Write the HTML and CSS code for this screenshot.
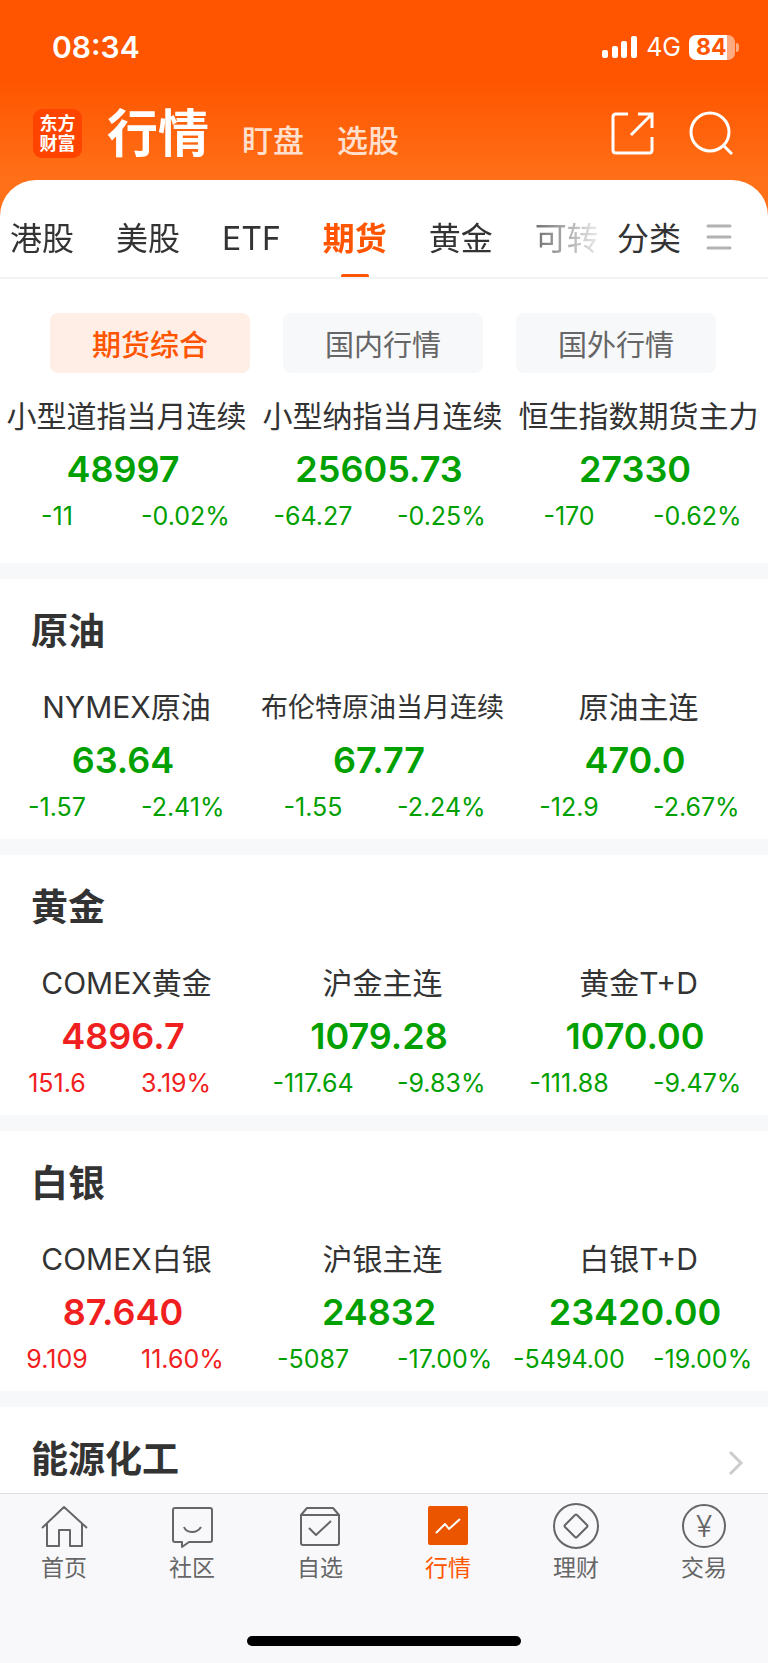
FILE: index.html
```
<!DOCTYPE html>
<html lang="zh-CN">

<head>
  <meta charset="UTF-8">
  <meta name="viewport" content="width=device-width, initial-scale=1.0">
  <link rel="stylesheet" href="styles.css">
  <title>行情</title>
</head>

<body>

  <header class="header">
    <div class="status-bar">
      <span class="time">08:34</span>
      <div class="status-icons">
        <svg class="signal" width="36" height="24" viewBox="0 0 36 24" fill="#fff">
          <rect x="0" y="15" width="6" height="8" rx="2" />
          <rect x="10" y="11" width="6" height="12" rx="2" />
          <rect x="19" y="6" width="6" height="17" rx="2" />
          <rect x="29" y="1" width="6" height="22" rx="2" />
        </svg>
        <span class="network">4G</span>
        <div class="battery"><span class="battery-level">84</span></div>
      </div>
    </div>
    <div class="title-bar">
      <div class="logo">东方<br>财富</div>
      <nav class="title-nav">
        <h1>行情</h1>
        <a href="#">盯盘</a>
        <a href="#">选股</a>
      </nav>
      <button class="icon-btn" aria-label="分享">
        <svg width="44" height="44" viewBox="0 0 44 44" fill="none" stroke="#fff" stroke-width="3">
          <path d="M18 3H6Q3 3 3 6V39Q3 42 6 42H39Q42 42 42 39V26" />
          <path d="M28 3H42V17M42 3L21 24" />
        </svg>
      </button>
      <button class="icon-btn" aria-label="搜索">
        <svg width="44" height="44" viewBox="0 0 44 44" fill="none" stroke="#fff" stroke-width="3">
          <circle cx="21" cy="21" r="19" />
          <path d="M34 34L43 43" />
        </svg>
      </button>
    </div>
  </header>

  <main class="content">
    <div class="tabs">
      <nav class="tab-list">
        <a href="#">港股</a>
        <a href="#">美股</a>
        <a href="#">ETF</a>
        <a href="#" class="active">期货</a>
        <a href="#">黄金</a>
        <a href="#">可转</a>
      </nav>
      <button class="category-btn">分类
        <svg width="26" height="26" viewBox="0 0 26 26" stroke="#b2b2b2" stroke-width="3" stroke-linecap="round">
          <path d="M2 2H24M2 13H24M2 24H24" />
        </svg>
      </button>
    </div>

    <div class="chips">
      <button class="chip active">期货综合</button>
      <button class="chip">国内行情</button>
      <button class="chip">国外行情</button>
    </div>

    <section class="section first">
      <div class="quotes">
        <a href="#" class="quote down">
          <span class="name">小型道指当月连续</span>
          <span class="price">48997</span>
          <span class="change">-11</span><span class="percent">-0.02%</span>
        </a>
        <a href="#" class="quote down">
          <span class="name">小型纳指当月连续</span>
          <span class="price">25605.73</span>
          <span class="change">-64.27</span><span class="percent">-0.25%</span>
        </a>
        <a href="#" class="quote down">
          <span class="name">恒生指数期货主力</span>
          <span class="price">27330</span>
          <span class="change">-170</span><span class="percent">-0.62%</span>
        </a>
      </div>
    </section>

    <section class="section">
      <h2>原油</h2>
      <div class="quotes">
        <a href="#" class="quote down">
          <span class="name">NYMEX原油</span>
          <span class="price">63.64</span>
          <span class="change">-1.57</span><span class="percent">-2.41%</span>
        </a>
        <a href="#" class="quote down">
          <span class="name small">布伦特原油当月连续</span>
          <span class="price">67.77</span>
          <span class="change">-1.55</span><span class="percent">-2.24%</span>
        </a>
        <a href="#" class="quote down">
          <span class="name">原油主连</span>
          <span class="price">470.0</span>
          <span class="change">-12.9</span><span class="percent">-2.67%</span>
        </a>
      </div>
    </section>

    <section class="section">
      <h2>黄金</h2>
      <div class="quotes">
        <a href="#" class="quote up">
          <span class="name">COMEX黄金</span>
          <span class="price">4896.7</span>
          <span class="change">151.6</span><span class="percent">3.19%</span>
        </a>
        <a href="#" class="quote down">
          <span class="name">沪金主连</span>
          <span class="price">1079.28</span>
          <span class="change">-117.64</span><span class="percent">-9.83%</span>
        </a>
        <a href="#" class="quote down">
          <span class="name">黄金T+D</span>
          <span class="price">1070.00</span>
          <span class="change">-111.88</span><span class="percent">-9.47%</span>
        </a>
      </div>
    </section>

    <section class="section">
      <h2>白银</h2>
      <div class="quotes">
        <a href="#" class="quote up">
          <span class="name">COMEX白银</span>
          <span class="price">87.640</span>
          <span class="change">9.109</span><span class="percent">11.60%</span>
        </a>
        <a href="#" class="quote down">
          <span class="name">沪银主连</span>
          <span class="price">24832</span>
          <span class="change">-5087</span><span class="percent">-17.00%</span>
        </a>
        <a href="#" class="quote down">
          <span class="name">白银T+D</span>
          <span class="price">23420.00</span>
          <span class="change">-5494.00</span><span class="percent">-19.00%</span>
        </a>
      </div>
    </section>

    <section class="section">
      <h2>能源化工
        <svg width="16" height="26" viewBox="0 0 16 26" fill="none" stroke="#ccc" stroke-width="3">
          <path d="M2 2L13 13L2 24" />
        </svg>
      </h2>
    </section>
  </main>

  <footer class="bottom-bar">
    <nav class="bottom-nav">
      <a href="#">
        <svg viewBox="0 0 48 48">
          <path d="M2 27L24 6L47 27M7 23V45H19V29H30V45H42V23" />
        </svg>
        首页
      </a>
      <a href="#">
        <svg viewBox="0 0 48 48">
          <path d="M7 7H42Q44 7 44 9V39Q44 41 42 41H21L14 46V41H7Q5 41 5 39V9Q5 7 7 7Z" />
          <path d="M16 26Q18 31 24 31T33 26" />
        </svg>
        社区
      </a>
      <a href="#">
        <svg viewBox="0 0 48 48">
          <path d="M5 14L11 7H37L43 14V42Q43 44 41 44H7Q5 44 5 42ZM5 14H43" />
          <path d="M13 27L20 34L35 20" />
        </svg>
        自选
      </a>
      <a href="#" class="active">
        <svg viewBox="0 0 48 48">
          <rect class="fill" x="4" y="5" width="40" height="39" rx="2" />
          <path class="line" d="M12 32L21 23L25 28L36 18" />
        </svg>
        行情
      </a>
      <a href="#">
        <svg viewBox="0 0 48 48">
          <circle cx="24" cy="25" r="22" />
          <path d="M23 14Q24 13 25 14L35 24Q36 25 35 26L25 36Q24 37 23 36L13 26Q12 25 13 24Z" />
        </svg>
        理财
      </a>
      <a href="#">
        <svg viewBox="0 0 48 48">
          <circle cx="24" cy="25" r="21" />
          <text x="24" y="36" text-anchor="middle">¥</text>
        </svg>
        交易
      </a>
    </nav>
    <div class="home-indicator"></div>
  </footer>

</body>

</html>
```
FILE: styles.css
```
* {
  box-sizing: border-box;
}

body {
  display: flex;
  flex-direction: column;
  height: 100vh;
  margin: 0;
  overflow: hidden;
  background: linear-gradient(#ff5500 80px, #ff7018 180px);
  font-family: Inter, "Noto Sans CJK SC", sans-serif;
  color: #333;
}

a {
  color: inherit;
  text-decoration: none;
}

button {
  padding: 0;
  border: none;
  background: none;
  font-family: inherit;
  color: inherit;
}

svg {
  display: block;
  flex: none;
}

/* header */
.status-bar {
  display: flex;
  justify-content: space-between;
  align-items: center;
  height: 94px;
  padding: 0 30px 0 52px;
  color: #fff;
}

.time {
  font-size: 30px;
  font-weight: 600;
}

.status-icons {
  display: flex;
  align-items: center;
  gap: 8px;
}

.network {
  font-size: 25px;
}

.battery {
  position: relative;
  width: 46px;
  height: 25px;
  margin-right: 3px;
  border-radius: 7px;
  background: linear-gradient(90deg, #fff 38px, #ffaa80 38px);
}

.battery::after {
  content: "";
  position: absolute;
  top: 8px;
  right: -4px;
  width: 3px;
  height: 9px;
  border-radius: 0 3px 3px 0;
  background-color: #ffaa80;
}

.battery-level {
  display: block;
  padding-left: 7px;
  font-size: 23px;
  font-weight: 700;
  line-height: 25px;
  color: #ff5500;
}

.title-bar {
  display: flex;
  align-items: center;
  height: 86px;
  padding: 0 35px 8px 33px;
  color: #fff;
}

.logo {
  width: 49px;
  height: 49px;
  padding-top: 5px;
  border-radius: 9px;
  background-color: #ff4400;
  font-size: 18px;
  font-weight: 700;
  line-height: 20px;
  text-align: center;
}

.title-nav {
  display: flex;
  flex: 1;
  align-items: baseline;
  gap: 33px;
  margin-left: 25px;
  padding-top: 8px;
  font-size: 31px;
  font-weight: 500;
  line-height: 60px;
}

.title-nav h1 {
  margin: 0;
  font-size: 51px;
  font-weight: 700;
}

.title-nav a {
  color: #ffe0cf;
}

.icon-btn {
  margin-left: 35px;
}

/* white card */
.content {
  flex: 1;
  min-height: 0;
  overflow: hidden;
  border-radius: 36px 36px 0 0;
  background-color: #fff;
}

.tabs {
  display: flex;
  height: 99px;
  padding: 0 36px 0 10px;
  border-bottom: 2px solid #f2f3f5;
  font-size: 32px;
}

.tab-list {
  display: flex;
  flex: 1;
  gap: 42px;
  overflow: hidden;
  white-space: nowrap;
  line-height: 118px;
  -webkit-mask-image: linear-gradient(90deg, #000 84%, transparent 102%);
  mask-image: linear-gradient(90deg, #000 84%, transparent 102%);
}

.tab-list a {
  position: relative;
}

.tab-list .active {
  color: #ff5500;
  font-weight: 700;
}

.tab-list .active::after {
  content: "";
  position: absolute;
  left: 50%;
  top: 94px;
  width: 28px;
  height: 4px;
  margin-left: -14px;
  border-radius: 2px;
  background-color: #ff5500;
}

.category-btn {
  display: flex;
  gap: 25px;
  margin-left: 20px;
  font-size: 32px;
  line-height: 118px;
}

.category-btn svg {
  margin-top: 44px;
}

.chips {
  display: grid;
  grid-template-columns: repeat(3, 1fr);
  gap: 33px;
  padding: 34px 52px 21px 50px;
}

.chip {
  height: 60px;
  border-radius: 8px;
  background-color: #f7f8fa;
  font-size: 29px;
  color: #666;
}

.chip.active {
  background-color: #ffeee6;
  color: #ff5500;
  font-weight: 500;
}

/* quotes */
.section {
  padding: 29px 0 16px;
  border-top: 16px solid #f7f8fa;
}

.section.first {
  padding: 0 0 31px;
  border-top: none;
}

.section h2 {
  display: flex;
  justify-content: space-between;
  margin: 0 0 29px;
  padding: 0 24px 0 31px;
  font-size: 37px;
  font-weight: 700;
  line-height: 48px;
}

.section h2 svg {
  margin-top: 14px;
}

.quotes {
  display: grid;
  grid-template-columns: repeat(3, 1fr);
}

.quote {
  display: grid;
  grid-template-columns: 114px 1fr;
  grid-template-rows: 44px 62px 32px;
  align-items: center;
}

.name,
.price {
  grid-column: span 2;
  text-align: center;
  white-space: nowrap;
}

.name {
  padding: 0 3px 4px 0;
  font-size: 30px;
  color: #333;
}

.name.small {
  font-size: 27px;
}

.price {
  padding-right: 10px;
  font-size: 36px;
  font-weight: 600;
}

.change,
.percent {
  font-size: 25px;
}

.change {
  text-align: center;
}

.percent {
  padding-left: 27px;
}

.up {
  color: #f02020;
}

.down {
  color: #00a000;
}

/* bottom bar */
.bottom-bar {
  height: 170px;
  border-top: 1px solid #dddfe3;
  background-color: #f8f8fa;
}

.bottom-nav {
  display: grid;
  grid-template-columns: repeat(6, 1fr);
  height: 142px;
  padding-top: 7px;
  font-size: 23px;
  line-height: 39px;
  color: #666;
}

.bottom-nav a {
  display: flex;
  flex-direction: column;
  align-items: center;
}

.bottom-nav svg {
  width: 48px;
  height: 48px;
  fill: none;
  stroke: #666;
  stroke-width: 2;
  stroke-linejoin: round;
}

.bottom-nav text {
  fill: #666;
  stroke: none;
  font-size: 30px;
  font-weight: 300;
}

.bottom-nav .active {
  color: #ff5500;
}

.bottom-nav .fill {
  fill: #eb5500;
  stroke: none;
}

.bottom-nav .line {
  stroke: #fff;
}

.home-indicator {
  width: 274px;
  height: 10px;
  margin: 0 auto;
  border-radius: 5px;
  background-color: #000;
}
```
